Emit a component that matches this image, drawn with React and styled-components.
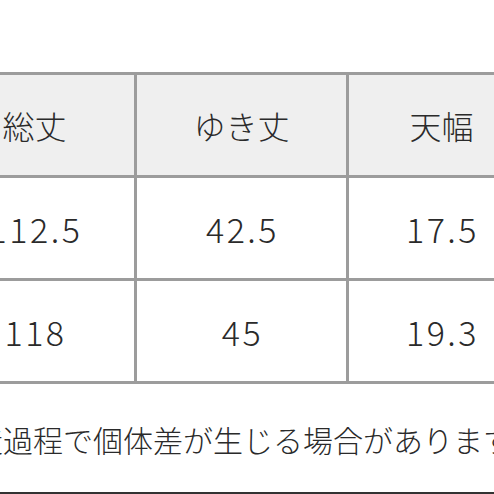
import React from "react";
import styled, { createGlobalStyle } from "styled-components";

const GlobalStyle = createGlobalStyle`
  html, body {
    margin: 0;
    padding: 0;
    background: #ffffff;
    overflow: hidden;
  }
  body {
    font-family: "Noto Sans CJK JP", "Noto Sans", sans-serif;
  }
`;

const Page = styled.div`
  width: 494px;
  height: 494px;
  box-sizing: border-box;
  overflow: hidden;
  padding-top: 72px;
  border-bottom: 2px solid #333333;
  background: #ffffff;
`;

const Table = styled.table`
  border-collapse: collapse;
  table-layout: fixed;
  width: 602px;
  margin-left: -68px;
`;

const Col = styled.col`
  width: ${({ $w }) => $w}px;
`;

const HeadCell = styled.th`
  border: 3px solid #9c9c9c;
  background: #efefef;
  height: 100px;
  padding: 0;
  text-align: center;
  font-weight: 300;
  font-size: 32px;
  color: #2a2a2a;
`;

const Cell = styled.td`
  border: 3px solid #9c9c9c;
  background: #ffffff;
  height: 100px;
  padding: 0 0 0 2px;
  text-align: center;
  font-weight: 300;
  font-size: 34px;
  letter-spacing: 2.5px;
  color: #2a2a2a;
`;

const Note = styled.p`
  margin: 35px 0 0 -27px;
  white-space: nowrap;
  font-weight: 300;
  font-size: 30px;
  line-height: 40px;
  color: #2a2a2a;
`;

const headers = ["総丈", "ゆき丈", "天幅"];
const rows = [
  ["112.5", "42.5", "17.5"],
  ["118", "45", "19.3"],
];

export default function App() {
  return (
    <>
      <GlobalStyle />
      <Page>
        <Table>
          <colgroup>
            <Col $w={202} />
            <Col $w={212} />
            <Col $w={188} />
          </colgroup>
          <thead>
            <tr>
              {headers.map((h) => (
                <HeadCell key={h}>{h}</HeadCell>
              ))}
            </tr>
          </thead>
          <tbody>
            {rows.map((r, i) => (
              <tr key={i}>
                {r.map((v, j) => (
                  <Cell key={j}>{v}</Cell>
                ))}
              </tr>
            ))}
          </tbody>
        </Table>
        <Note>造過程で個体差が生じる場合があります。</Note>
      </Page>
    </>
  );
}
